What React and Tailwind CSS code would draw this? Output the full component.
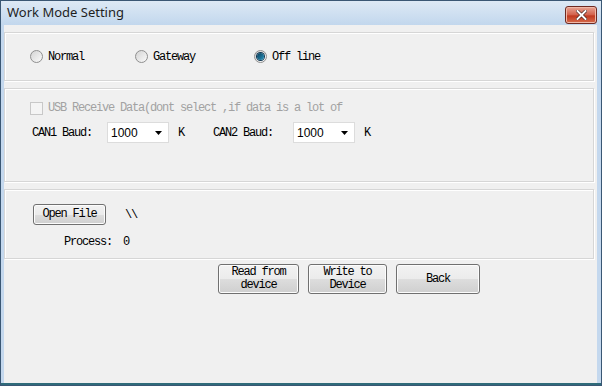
import React from 'react';

const MONO = "font-[Liberation_Mono,Courier_New,monospace] text-[12px] tracking-[-1.2px]";

function Radio({ label, checked, width }) {
  return (
    <div className="flex items-center" style={{ width }}>
      <span className="relative flex h-[13px] w-[13px] items-center justify-center rounded-full border border-[#8f8f8f] bg-gradient-to-br from-[#d4d4d4] to-[#fafafa]">
        {checked && (
          <span className="h-[7px] w-[7px] rounded-full bg-gradient-to-br from-[#0a3f5c] to-[#2a94bd] ring-1 ring-[#0e3550]" />
        )}
      </span>
      <span className={`ml-[5px] text-black ${MONO}`}>{label}</span>
    </div>
  );
}

function Combo({ value }) {
  return (
    <div className="flex h-[21px] w-[62px] items-center justify-between border border-[#dcdcdc] bg-white pl-[3px] pr-[6px]">
      <span className="font-[Liberation_Sans,Arial,sans-serif] text-[12px] text-black">{value}</span>
      <svg width="7" height="4" viewBox="0 0 7 4"><path d="M0 0h7L3.5 4z" fill="#000" /></svg>
    </div>
  );
}

function WinButton({ children, className }) {
  return (
    <button
      type="button"
      className={`flex flex-col items-center justify-center rounded-[3px] border border-[#707070] bg-[linear-gradient(#f2f2f2_0%,#ebebeb_50%,#dddddd_51%,#cfcfcf_100%)] leading-[13px] text-black shadow-[inset_0_0_0_1px_#fcfcfc] ${MONO} ${className}`}
    >
      {children}
    </button>
  );
}

function Panel({ className, children }) {
  return (
    <div className={`border border-[#d6d6d6] shadow-[inset_1px_1px_0_#ffffff,1px_1px_0_#ffffff] ${className}`}>
      {children}
    </div>
  );
}

export default function App() {
  return (
    <div className="flex h-[386px] w-[602px] flex-col overflow-hidden bg-[#bcd3ea]">
      {/* title bar */}
      <div className="flex h-[25px] items-center justify-between border-l border-t border-r border-[#3a5774] bg-[linear-gradient(#dde9f5,#c2d7ed)] pl-[6px] pr-[4px]">
        <span className="font-[Noto_Sans,sans-serif] text-[13px] text-[#1e1e1e]">Work Mode Setting</span>
        <div className="mt-[3px] flex h-[18px] w-[32px] items-center justify-center rounded-[3px] border border-[#6e2a22] bg-[linear-gradient(#e8a594,#d2604a_50%,#c0391f_55%,#d66c4c)] shadow-[inset_0_0_0_1px_#f0b9a8]">
          <svg width="11" height="10" viewBox="0 0 11 10">
            <path d="M1.5 1l8 8M9.5 1l-8 8" stroke="#3b1a14" strokeWidth="3.2" strokeLinecap="square" />
            <path d="M1.5 1l8 8M9.5 1l-8 8" stroke="#ffffff" strokeWidth="2" strokeLinecap="square" />
          </svg>
        </div>
      </div>

      {/* body */}
      <div className="flex flex-1">
        <div className="w-[4px] border-l border-[#3a5774] bg-[#c4d8ee]" />
        <div className="flex flex-1 flex-col bg-[#f0f0f0] pt-[7px] pr-[3px]">
          <Panel className="flex h-[49px] items-center pl-[25px]">
            <Radio label="Normal" width={105} />
            <Radio label="Gateway" width={119} />
            <Radio label="Off line" checked />
          </Panel>

          <Panel className="mt-[7px] flex h-[94px] flex-col pl-[25px] pt-[10px]">
            <div className="flex items-center">
              <span className="h-[13px] w-[13px] border border-[#c8c8c8] bg-[#f4f4f4]" />
              <span className={`ml-[5px] text-[#a2a2a2] ${MONO}`}>USB Receive Data(dont select ,if data is a lot of</span>
            </div>
            <div className="mt-[5px] flex items-center pl-[2px]">
              <span className={`w-[75px] text-black ${MONO}`}>CAN1 Baud:</span>
              <Combo value="1000" />
              <span className={`ml-[9px] w-[35px] text-black ${MONO}`}>K</span>
              <span className={`w-[80px] text-black ${MONO}`}>CAN2 Baud:</span>
              <Combo value="1000" />
              <span className={`ml-[9px] text-black ${MONO}`}>K</span>
            </div>
          </Panel>

          <Panel className="mt-[7px] flex h-[70px] flex-col pl-[28px] pt-[14px]">
            <div className="flex items-center">
              <WinButton className="h-[21px] w-[73px]">Open File</WinButton>
              <span className={`ml-[19px] text-black ${MONO}`}>\\</span>
            </div>
            <div className="mt-[8px] flex items-center pl-[31px]">
              <span className={`w-[59px] text-black ${MONO}`}>Process:</span>
              <span className={`text-black ${MONO}`}>0</span>
            </div>
          </Panel>

          <div className="mt-[5px] flex gap-[9px] pl-[214px]">
            <WinButton className="h-[30px] w-[81px]">
              <span>Read from</span>
              <span>device</span>
            </WinButton>
            <WinButton className="h-[30px] w-[79px]">
              <span>Write to</span>
              <span>Device</span>
            </WinButton>
            <WinButton className="h-[30px] w-[84px]">Back</WinButton>
          </div>
        </div>
        <div className="w-[5px] border-r border-[#3a5774] bg-[#c4d8ee]" />
      </div>
      <div className="h-[3px] border-x border-b border-[#3a5774] bg-[#2f6b7a]" />
    </div>
  );
}
